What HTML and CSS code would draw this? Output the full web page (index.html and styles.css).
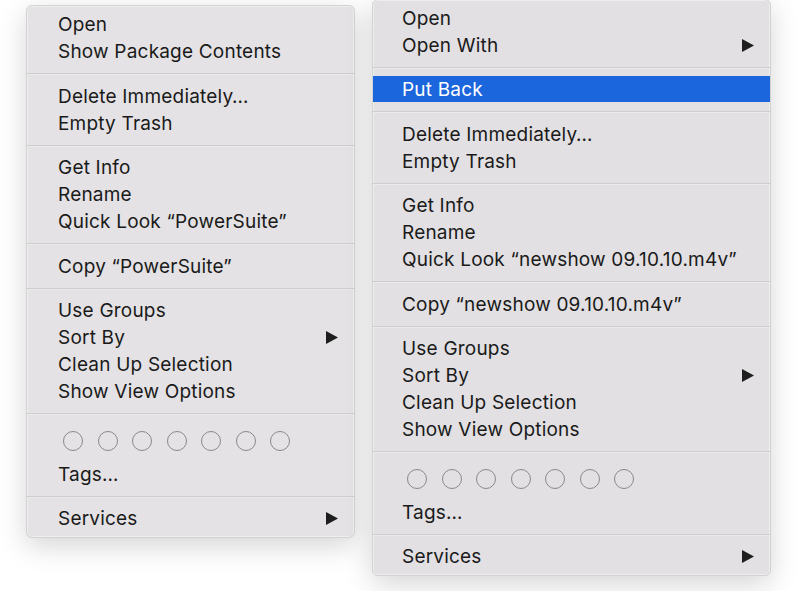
FILE: index.html
```html
<!DOCTYPE html>
<html>
<head>
<meta charset="utf-8">
<link rel="stylesheet" href="styles.css">
</head>
<body>
<div class="desk">
  <div class="menu menu-left">
    <div class="item">Open</div>
    <div class="item">Show Package Contents</div>
    <div class="sep"></div>
    <div class="item">Delete Immediately…</div>
    <div class="item">Empty Trash</div>
    <div class="sep"></div>
    <div class="item">Get Info</div>
    <div class="item">Rename</div>
    <div class="item">Quick Look “PowerSuite”</div>
    <div class="sep"></div>
    <div class="item">Copy “PowerSuite”</div>
    <div class="sep"></div>
    <div class="item">Use Groups</div>
    <div class="item">Sort By<svg class="arrow" viewBox="0 0 12 13"><polygon points="0,0 12,6.5 0,13"/></svg></div>
    <div class="item">Clean Up Selection</div>
    <div class="item">Show View Options</div>
    <div class="sep"></div>
    <div class="tags"><span class="dot"></span><span class="dot"></span><span class="dot"></span><span class="dot"></span><span class="dot"></span><span class="dot"></span><span class="dot"></span></div>
    <div class="item">Tags…</div>
    <div class="sep"></div>
    <div class="item">Services<svg class="arrow" viewBox="0 0 12 13"><polygon points="0,0 12,6.5 0,13"/></svg></div>
  </div>
  <div class="menu menu-right">
    <div class="item">Open</div>
    <div class="item">Open With<svg class="arrow" viewBox="0 0 12 13"><polygon points="0,0 12,6.5 0,13"/></svg></div>
    <div class="sep"></div>
    <div class="item selected">Put Back</div>
    <div class="sep"></div>
    <div class="item">Delete Immediately…</div>
    <div class="item">Empty Trash</div>
    <div class="sep"></div>
    <div class="item">Get Info</div>
    <div class="item">Rename</div>
    <div class="item">Quick Look “newshow 09.10.10.m4v”</div>
    <div class="sep"></div>
    <div class="item">Copy “newshow 09.10.10.m4v”</div>
    <div class="sep"></div>
    <div class="item">Use Groups</div>
    <div class="item">Sort By<svg class="arrow" viewBox="0 0 12 13"><polygon points="0,0 12,6.5 0,13"/></svg></div>
    <div class="item">Clean Up Selection</div>
    <div class="item">Show View Options</div>
    <div class="sep"></div>
    <div class="tags"><span class="dot"></span><span class="dot"></span><span class="dot"></span><span class="dot"></span><span class="dot"></span><span class="dot"></span><span class="dot"></span></div>
    <div class="item">Tags…</div>
    <div class="sep"></div>
    <div class="item">Services<svg class="arrow" viewBox="0 0 12 13"><polygon points="0,0 12,6.5 0,13"/></svg></div>
  </div>
</div>
</body>
</html>
```
FILE: styles.css
```css
html, body {
  margin: 0;
  padding: 0;
  background: #ffffff;
  overflow: hidden;
}
.desk {
  display: flex;
  align-items: flex-start;
  gap: 17px;
  padding-left: 26px;
  height: 591px;
  font-family: "Inter", "Liberation Sans", sans-serif;
  font-size: 19px;
  letter-spacing: 0.2px;
  color: #1a1a1a;
}
.menu {
  box-sizing: border-box;
  background: #e4e2e4;
  border: 1px solid #d3d2d3;
  border-radius: 6px;
  padding: 5px 0;
  box-shadow: 0 8px 28px rgba(0, 0, 0, 0.17), inset 0 0 0 1px rgba(255, 255, 255, 0.45);
}
.menu-left {
  width: 329px;
  margin-top: 5px;
}
.menu-right {
  width: 399px;
  margin-top: -1.5px;
  background: #e2e0e2;
}
.item {
  height: 27px;
  display: flex;
  align-items: center;
  justify-content: space-between;
  padding: 0 16px 0 31px;
  white-space: nowrap;
}
.menu-right .item {
  padding-left: 29px;
}
.item.selected {
  background: #1b66dc;
  color: #ffffff;
  height: 26px;
  margin-bottom: 1px;
}
.arrow {
  width: 12px;
  height: 13px;
  fill: #1e1e1e;
}
.sep {
  height: 17.5px;
  display: flex;
  align-items: center;
}
.sep::before {
  content: "";
  flex: 1;
  height: 1px;
  background: #cecdce;
  box-shadow: 0 1px 0 #eceaec;
}
.tags {
  height: 38px;
  box-sizing: border-box;
  padding: 8px 0 10px 36px;
  display: flex;
  gap: 14.5px;
}
.menu-right .tags {
  padding-left: 34px;
}
.dot {
  box-sizing: border-box;
  width: 20px;
  height: 20px;
  border: 1.2px solid #8a898a;
  border-radius: 50%;
}
```
